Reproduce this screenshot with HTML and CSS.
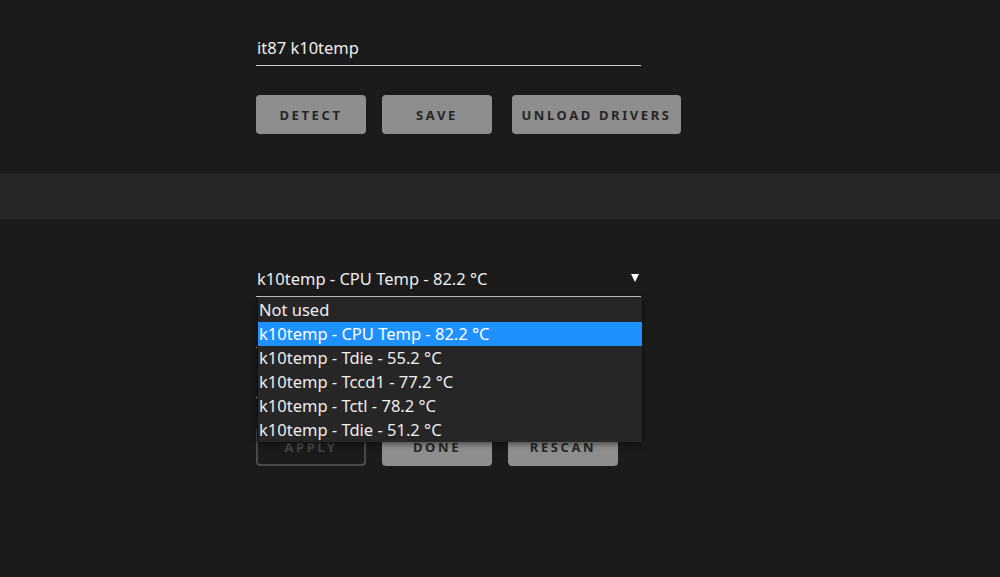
FILE: index.html
```html
<!DOCTYPE html>
<html lang="en">
<head>
    <meta charset="UTF-8">
    <title>Sensors</title>
    <link rel="stylesheet" href="styles.css">
</head>
<body>
    <section class="panel">
        <div class="field">
            <span class="field-text">it87 k10temp</span>
        </div>
        <div class="btn-row">
            <button class="btn">Detect</button>
            <button class="btn">Save</button>
            <button class="btn btn-wide">Unload drivers</button>
        </div>
    </section>

    <div class="band"></div>

    <section class="panel panel-sensors">
        <div class="select-wrap">
            <div class="field select">
                <span class="field-text">k10temp - CPU Temp - 82.2 °C</span>
                <svg class="arrow" width="8" height="8" viewBox="0 0 8 8"><path d="M0 0 H8 L4 8 Z" fill="#fff"/></svg>
            </div>
            <ul class="options">
                <li>Not used</li>
                <li class="selected">k10temp - CPU Temp - 82.2 °C</li>
                <li>k10temp - Tdie - 55.2 °C</li>
                <li>k10temp - Tccd1 - 77.2 °C</li>
                <li>k10temp - Tctl - 78.2 °C</li>
                <li>k10temp - Tdie - 51.2 °C</li>
            </ul>
        </div>
        <div class="field field-small"></div>
        <div class="field field-small"></div>
        <div class="btn-row">
            <button class="btn btn-outline">Apply</button>
            <button class="btn">Done</button>
            <button class="btn">Rescan</button>
        </div>
    </section>
</body>
</html>
```

FILE: styles.css
```css
body {
    margin: 0;
    background: #1b1b1b;
    font-family: 'Noto Sans', 'Open Sans', sans-serif;
    color: #eeeeee;
    height: 577px;
    overflow: hidden;
}

.panel {
    width: 385px;
    margin-left: 256px;
    padding: 30px 0 40px;
}

.panel-sensors {
    padding-top: 42px;
}

.field {
    height: 35px;
    border-bottom: 1px solid #cfcfcf;
    display: flex;
    align-items: center;
    padding-left: 1px;
}

.field-text {
    font-size: 16.5px;
}

.select {
    justify-content: space-between;
    padding-right: 2px;
}

.arrow {
    margin-top: -2px;
}

.field-small {
    margin-top: 15px;
}

.field-small + .field-small {
    margin-top: 14px;
}

.btn-row {
    display: flex;
    gap: 16px;
    margin-top: 29px;
}

.btn {
    flex-shrink: 0;
    width: 110px;
    height: 39px;
    background: #8e8e8e;
    border: none;
    border-radius: 4px;
    font-family: 'Noto Sans', 'Open Sans', sans-serif;
    font-weight: bold;
    font-size: 13px;
    letter-spacing: 2.6px;
    text-transform: uppercase;
    color: #262626;
    padding: 1px 0 0;
}

.btn-wide {
    width: 169px;
    margin-left: 4px;
}

.btn-outline {
    background: transparent;
    border: 2px solid #4a4a4a;
    color: #454545;
}

.band {
    height: 45px;
    background: #262626;
}

.select-wrap {
    position: relative;
}

.options {
    position: absolute;
    top: 36px;
    left: 1px;
    width: 384px;
    margin: 0;
    padding: 1px 0 0;
    list-style: none;
    background: #262626;
    border-left: 1px solid #111;
    box-shadow: 0 2px 6px rgba(0, 0, 0, 0.5);
    z-index: 10;
}

.options li {
    height: 24px;
    line-height: 24px;
    font-size: 16.5px;
    padding-left: 1px;
    white-space: nowrap;
}

.options .selected {
    background: #1e90ff;
    color: #ffffff;
}
```
